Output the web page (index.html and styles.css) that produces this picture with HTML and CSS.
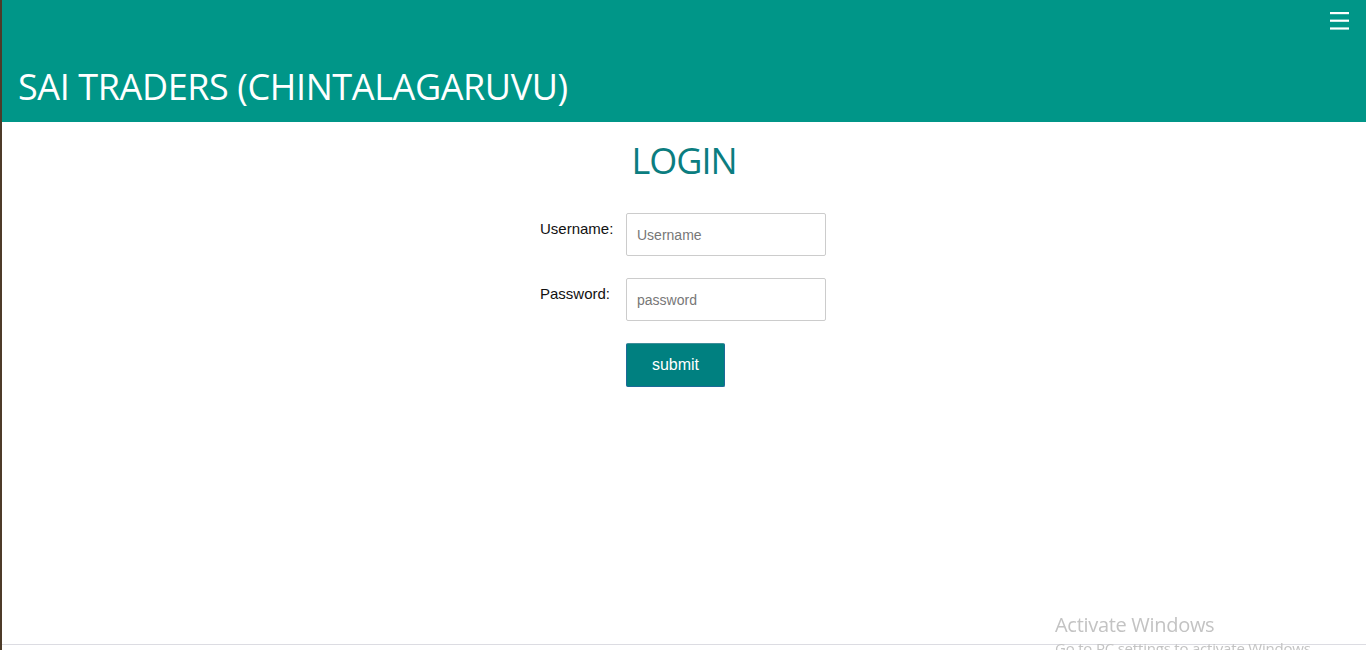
FILE: index.html
```html
<!DOCTYPE html>
<html lang="en">
<head>
<meta charset="utf-8">
<title>SAI TRADERS - Login</title>
<link rel="stylesheet" href="styles.css">
</head>
<body>
<div class="page">
  <header class="topbar">
    <div class="topbar-row">
      <button class="menu-btn" aria-label="Menu">
        <svg width="19" height="18" viewBox="0 0 19 18"><rect x="0" y="0" width="19" height="2.2" fill="#fff"/><rect x="0" y="7.6" width="19" height="2.2" fill="#fff"/><rect x="0" y="15.4" width="19" height="2.2" fill="#fff"/></svg>
      </button>
    </div>
    <h1 class="brand">SAI TRADERS (CHINTALAGARUVU)</h1>
  </header>
  <main class="content">
    <h2 class="login-title">LOGIN</h2>
    <form class="login-form" onsubmit="return false;">
      <label class="field-label" for="username">Username:</label>
      <input class="field-input" id="username" type="text" placeholder="Username">
      <label class="field-label" for="password">Password:</label>
      <input class="field-input" id="password" type="password" placeholder="password">
      <span></span>
      <button class="submit-btn" type="submit">submit</button>
    </form>
  </main>
  <footer class="footer"></footer>
</div>
<div class="watermark">
  <div class="wm-title">Activate Windows</div>
  <div class="wm-sub">Go to PC settings to activate Windows.</div>
</div>
</body>
</html>
```
FILE: styles.css
```css
html, body {
  margin: 0;
  padding: 0;
  height: 100%;
  overflow: hidden;
  background: #ffffff;
}

.page {
  height: 650px;
  display: flex;
  flex-direction: column;
  border-left: 2px solid #4d3b29;
  box-sizing: border-box;
  font-family: "Liberation Sans", Arial, sans-serif;
}

.topbar {
  background: #009688;
  height: 122px;
  box-sizing: border-box;
  display: flex;
  flex-direction: column;
  padding: 0 0 0 16px;
}

.topbar-row {
  display: flex;
  justify-content: flex-end;
  padding: 12px 17px 0 0;
}

.menu-btn {
  background: none;
  border: 0;
  padding: 0;
  margin: 0;
  width: 19px;
  height: 18px;
  display: block;
  cursor: pointer;
}
.menu-btn svg { display: block; }

.brand {
  margin: 37px 0 0 0;
  font-family: "Open Sans", "Noto Sans", sans-serif;
  font-weight: 400;
  font-size: 36px;
  letter-spacing: -0.4px;
  line-height: 40px;
  color: #ffffff;
}

.content {
  flex: 1;
  display: flex;
  flex-direction: column;
  align-items: center;
}

.login-title {
  margin: 17px 0 0 0;
  font-family: "Open Sans", "Noto Sans", sans-serif;
  font-weight: 400;
  font-size: 36px;
  letter-spacing: -1px;
  line-height: 44px;
  color: #0b7d80;
}

.login-form {
  margin: 30px 0 0 -2px;
  display: grid;
  grid-template-columns: 86px 200px;
  row-gap: 22px;
  align-items: start;
}

.field-label {
  font-size: 15px;
  color: #111;
  padding-top: 7px;
}

.field-input {
  width: 200px;
  height: 43px;
  box-sizing: border-box;
  border: 1px solid #cccccc;
  border-radius: 2px;
  padding: 0 10px;
  font-family: "Liberation Sans", Arial, sans-serif;
  font-size: 14px;
  color: #333;
  outline: none;
}
.field-input::placeholder { color: #777; }

.submit-btn {
  width: 99px;
  height: 44px;
  box-sizing: border-box;
  background: #008080;
  border: 1px solid #1c6a98;
  border-top-color: #3e8f9a;
  border-radius: 2px;
  color: #ffffff;
  font-family: "Liberation Sans", Arial, sans-serif;
  font-size: 16px;
  padding: 0;
  cursor: pointer;
}

.footer {
  height: 5px;
  border-top: 1px solid #dcdce2;
}

.watermark {
  position: fixed;
  left: 1055px;
  top: 612px;
  font-family: "Open Sans", "Noto Sans", sans-serif;
  color: #c3c3c3;
  pointer-events: none;
  white-space: nowrap;
}
.wm-title {
  font-size: 20px;
  line-height: 26px;
  letter-spacing: -0.3px;
}
.wm-sub {
  font-size: 15px;
  line-height: 20px;
  letter-spacing: -0.2px;
}
```
